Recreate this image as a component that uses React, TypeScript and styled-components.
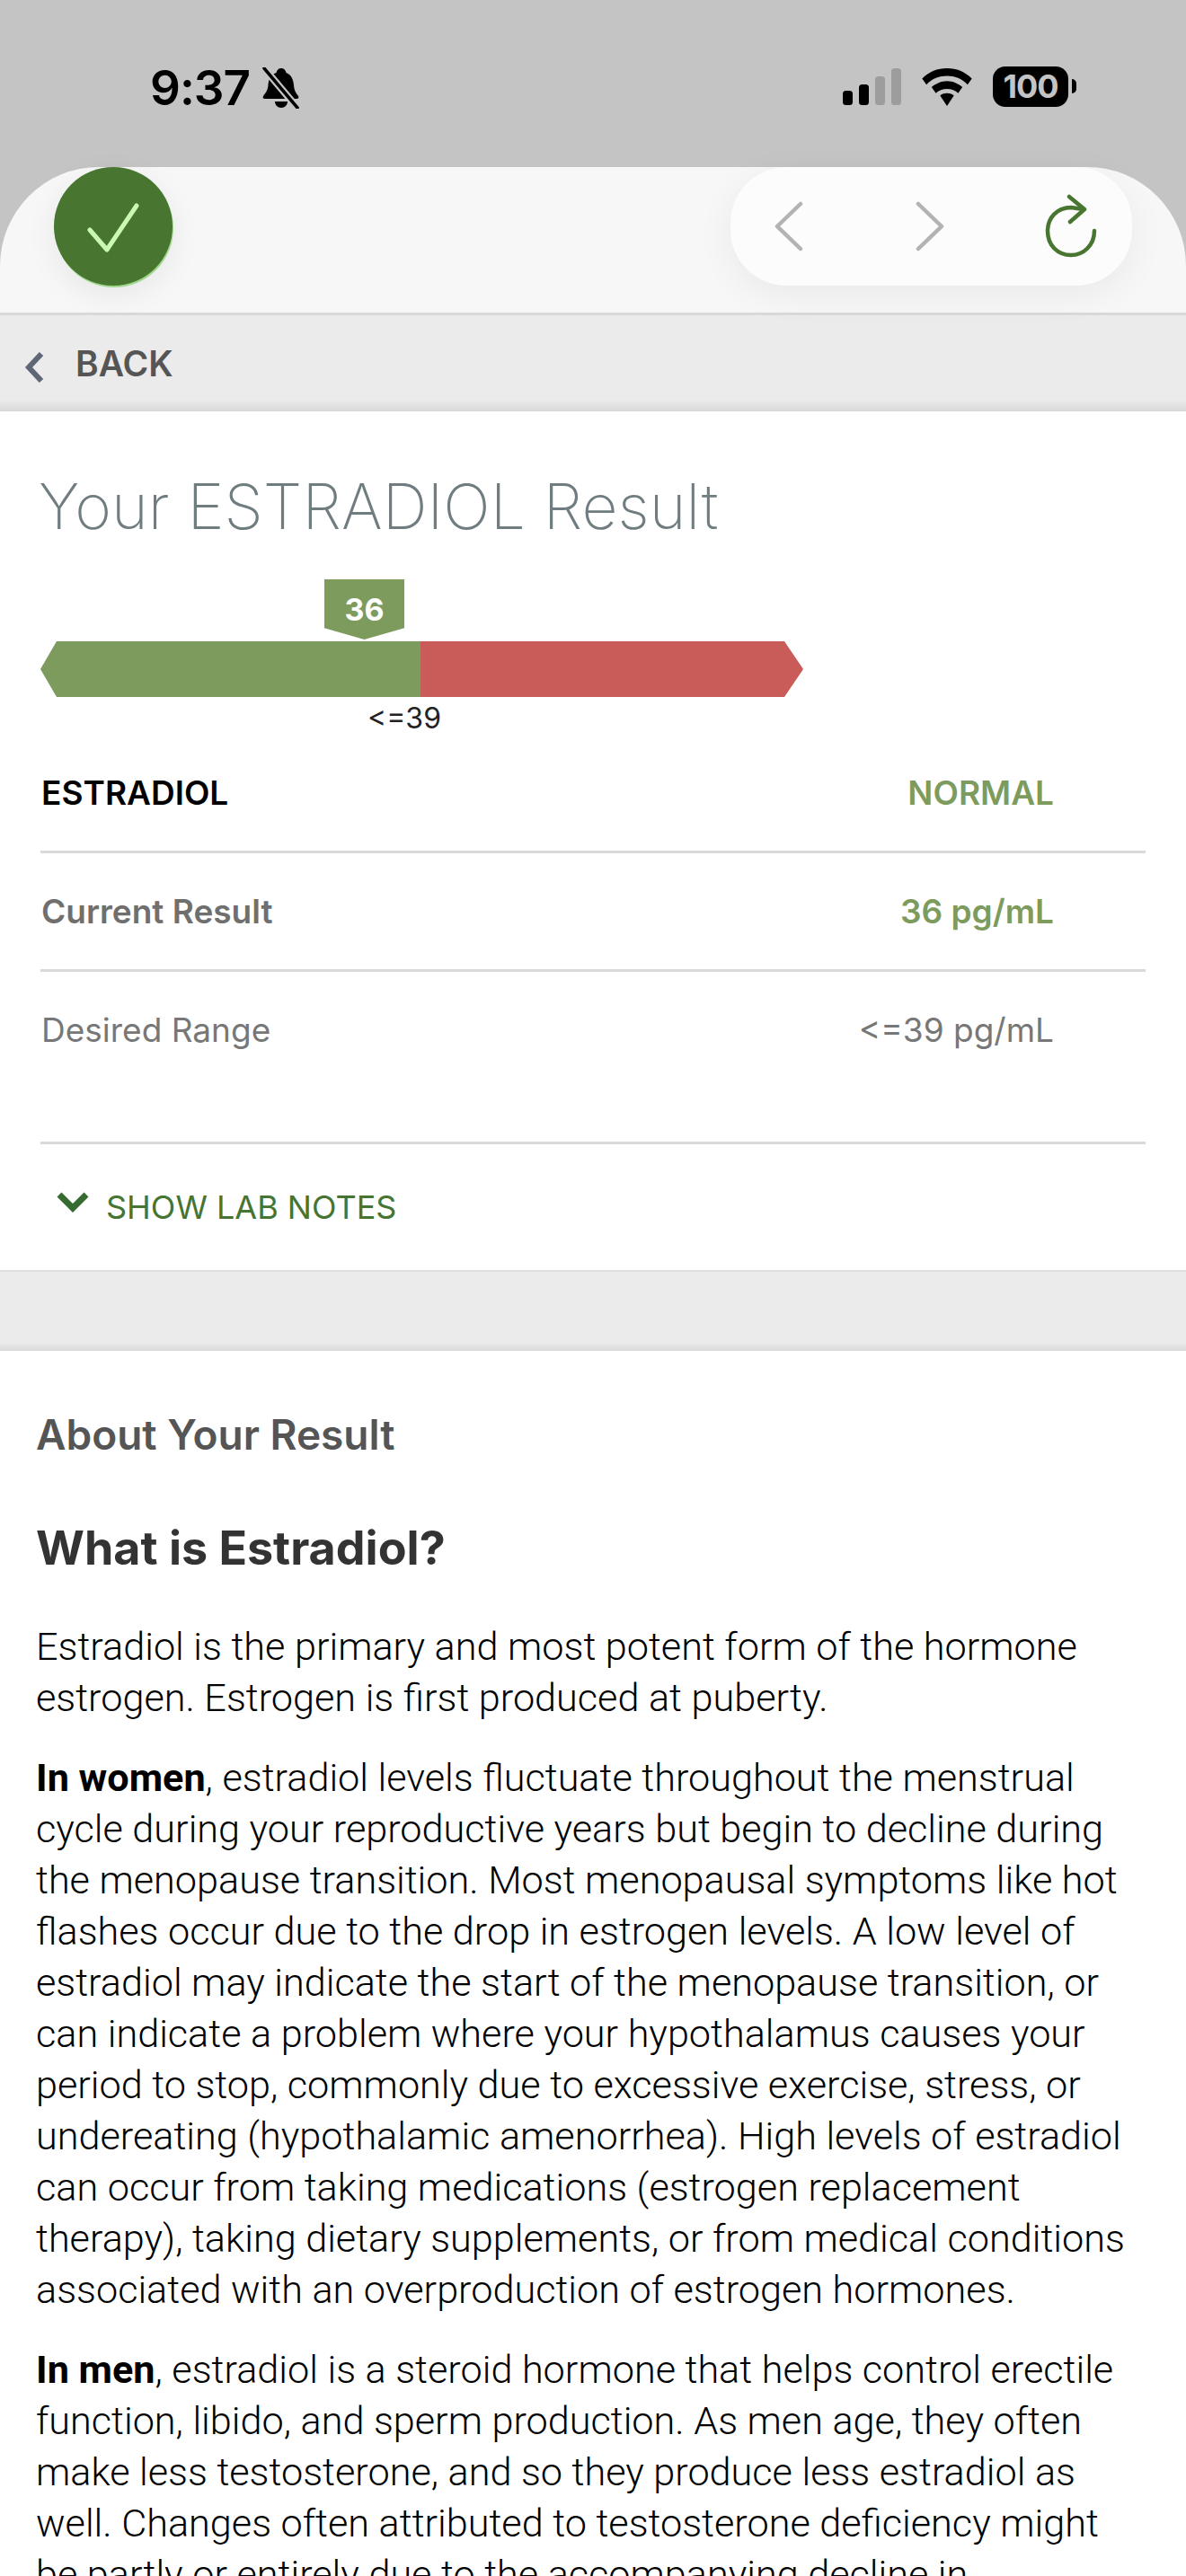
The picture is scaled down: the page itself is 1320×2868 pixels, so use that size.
import React from 'react'
import styled, { createGlobalStyle } from 'styled-components'

const GlobalStyle = createGlobalStyle`
  html, body {
    margin: 0;
    padding: 0;
    background: #fff;
  }
`
const Page = styled.div`
  width: 1320px;
  height: 2868px;
  overflow: hidden;
  background: #c4c4c4;
  font-family: Inter, 'Liberation Sans', sans-serif;
`
const StatusBar = styled.div`
  height: 186px;
  box-sizing: border-box;
  padding: 70px 131px 0 167px;
  display: flex;
  justify-content: space-between;
  align-items: flex-start;
`
const StatusLeft = styled.div`
  display: flex;
  align-items: center;
  gap: 13px;
`
const Time = styled.span`
  font-size: 53px;
  line-height: 56px;
  font-weight: 600;
  color: #000;
  letter-spacing: -1px;
`
const StatusRight = styled.div`
  display: flex;
  align-items: center;
  gap: 22px;
  margin-top: 4px;
`
const Toolbar = styled.div`
  height: 162px;
  box-sizing: border-box;
  padding-left: 60px;
  padding-right: 60px;
  display: flex;
  justify-content: space-between;
  align-items: flex-start;
  background: #f7f7f8;
  border-radius: 110px 110px 0 0;
`
const CheckBadge = styled.div`
  width: 132px;
  height: 132px;
  border-radius: 50%;
  background: #487631;
  box-shadow: 1px 2px 0 #9fd88c, 0 10px 34px rgba(0, 0, 0, 0.07);
  display: flex;
  align-items: center;
  justify-content: center;
`
const NavPill = styled.div`
  width: 447px;
  height: 132px;
  border-radius: 62px;
  background: #fcfcfc;
  box-shadow: 0 10px 40px rgba(0, 0, 0, 0.06);
  box-sizing: border-box;
  padding: 0 38px 0 49px;
  display: flex;
  align-items: center;
  justify-content: space-between;
`
const NavArrows = styled.div`
  display: flex;
  align-items: center;
  gap: 125px;
`
const BackBar = styled.div`
  height: 110px;
  box-sizing: border-box;
  border-top: 3px solid #d9d9d9;
  background: linear-gradient(#ebebeb 88%, #d9d9d9 100%);
  padding: 24px 0 0 27px;
  display: flex;
  align-items: flex-start;
  gap: 35px;
  svg {
    margin-top: 17px;
  }
`
const BackText = styled.span`
  font-size: 39px;
  line-height: 60px;
  font-weight: 600;
  color: #555;
`
const ResultCard = styled.section`
  height: 958px;
  box-sizing: border-box;
  background: #fff;
  padding: 65px 45px 0;
  border-bottom: 2px solid #dedede;
`
const Title = styled.h1`
  margin: 0 0 0 -2px;
  font-size: 69.5px;
  line-height: 82px;
  font-weight: 200;
  color: #6f7c80;
  letter-spacing: 0.1px;
`
const Gauge = styled.div`
  position: relative;
  width: 849px;
  height: 124px;
  margin-top: 40px;
  padding-top: 69px;
  box-sizing: border-box;
`
const Marker = styled.div`
  position: absolute;
  left: 316px;
  top: 0;
  width: 89px;
  height: 67px;
  background: #7d9b5c;
  clip-path: polygon(0 0, 100% 0, 100% 81%, 50% 100%, 0 81%);
  color: #fff;
  font-size: 34px;
  font-weight: 700;
  line-height: 68px;
  text-align: center;
`
const Bar = styled.div`
  display: flex;
  height: 62px;
  clip-path: polygon(18px 0, calc(100% - 21px) 0, 100% 50%, calc(100% - 21px) 100%, 18px 100%, 0 50%);
`
const BarPart = styled.div<{ $color: string; $size: number }>`
  flex: ${(props) => props.$size};
  background: ${(props) => props.$color};
`
const BarLabel = styled.div`
  position: absolute;
  left: 355px;
  top: 135px;
  width: 100px;
  text-align: center;
  font-size: 32px;
  line-height: 40px;
  color: #222;
`
const Rows = styled.div`
  margin-top: 49px;
`
const Row = styled.div<{ $height: number }>`
  height: ${(props) => props.$height}px;
  box-sizing: border-box;
  border-bottom: 3px solid #d9d9d9;
  display: flex;
  justify-content: space-between;
  align-items: flex-start;
  padding: 40px 102px 0 1px;
  line-height: 50px;
  font-size: 37px;
`
const RowName = styled.span<{ $color: string; $weight: number }>`
  color: ${(props) => props.$color};
  font-weight: ${(props) => props.$weight};
`
const RowValue = styled.span<{ $color: string; $weight: number }>`
  color: ${(props) => props.$color};
  font-weight: ${(props) => props.$weight};
`
const Toggle = styled.div`
  display: flex;
  align-items: flex-start;
  padding: 45px 0 0 18px;
  gap: 19px;
  color: #467431;
  font-size: 36px;
  line-height: 50px;
  svg {
    margin-top: 8px;
  }
`
const Spacer = styled.div`
  height: 88px;
  background: linear-gradient(#ebebeb 90%, #d9d9d9 100%);
`
const About = styled.section`
  background: #fff;
  padding: 63px 40px 0;
  height: 1400px;
`
const AboutLabel = styled.h2`
  margin: 0;
  font-size: 46px;
  line-height: 60px;
  font-weight: 600;
  color: #555;
`
const AboutHeading = styled.h3`
  margin: 67px 0 0;
  font-size: 52px;
  line-height: 60px;
  font-weight: 700;
  color: #333;
`
const Body = styled.p`
  margin: 32px 0 0;
  font-family: Roboto, 'Liberation Sans', Arial, sans-serif;
  font-weight: 300;
  font-size: 43.2px;
  line-height: 57px;
  color: #000;
  &:first-of-type {
    margin-top: 51px;
  }
  b {
    font-weight: 700;
  }
`
const Line = styled.span`
  display: block;
  white-space: nowrap;
`

const BellOff = () => (
  <svg width="44" height="46" viewBox="0 0 44 46">
    <path d="M22 1c3 0 5 2 5.500 5 6 2 8 8 8.500 14 .4 6 3 9 5 12 1 2 0 3-2 3H4c-2 0-3-1-2-3 2-3 5-6 5.500-12 .3-6 2.500-12 9-14C17 3 19 1 22 1z" fill="#000" />
    <path d="M15 38h14c0 4-3 7-7 7s-7-3-7-7z" fill="#000" />
    <path d="M3 1l37 44" stroke="#c4c4c4" strokeWidth="8" />
    <path d="M3 1l37 44" stroke="#000" strokeWidth="3.500" strokeLinecap="round" />
  </svg>
)

const Signal = () => (
  <svg width="65" height="41" viewBox="0 0 65 41">
    <rect x="0" y="25" width="11" height="16" rx="3.500" fill="#000" />
    <rect x="18" y="18" width="11" height="23" rx="3.500" fill="#000" />
    <rect x="36" y="9" width="11" height="32" rx="3.500" fill="#9d9d9d" />
    <rect x="54" y="0" width="11" height="41" rx="3.500" fill="#9d9d9d" />
  </svg>
)

const Wifi = () => (
  <svg width="58" height="42" viewBox="0 0 58 44">
    <path d="M29 0c11 0 21 4 29 12l-5 7C46 12 38 9 29 9S12 12 5 19l-5-7C8 4 18 0 29 0z" fill="#000" />
    <path d="M29 15c7 0 13 3 18 7l-5 7c-3-3-8-5-13-5s-10 2-13 5l-5-7c5-4 11-7 18-7z" fill="#000" />
    <path d="M29 29c4 0 6 1 8 3l-8 12-8-12c2-2 4-3 8-3z" fill="#000" />
  </svg>
)

const Battery = styled.div`
  position: relative;
  width: 84px;
  height: 45px;
  border-radius: 14px;
  background: #000;
  color: #c4c4c4;
  font-family: Inter, sans-serif;
  font-size: 36px;
  font-weight: 700;
  line-height: 45px;
  text-align: center;
  letter-spacing: -1px;
  &::after {
    content: '';
    position: absolute;
    right: -9px;
    top: 14px;
    width: 5px;
    height: 16px;
    border-radius: 0 5px 5px 0;
    background: #000;
  }
`

const Reload = () => (
  <svg width="60" height="72" viewBox="0 0 60 72" fill="none" stroke="#487631" strokeWidth="4.500" strokeLinecap="round" strokeLinejoin="round">
    <path d="M56 41C56 57 44 68 30 68C15 68 4 57 4 41C4 26 15 15 30 15L44 17" />
    <path d="M28 3l17 14-16 14" />
  </svg>
)

const NavChevron = ({ flip }: { flip?: boolean }) => (
  <svg width="32" height="56" viewBox="0 0 32 56" fill="none" stroke="#b3b3b3" strokeWidth="4.500" strokeLinecap="round" strokeLinejoin="round">
    <path d={flip ? 'M3 3l26 25-26 25' : 'M29 3L3 28l26 25'} />
  </svg>
)

const App = (): JSX.Element => (
  <Page>
    <GlobalStyle />
    <StatusBar>
      <StatusLeft>
        <Time>9:37</Time>
        <BellOff />
      </StatusLeft>
      <StatusRight>
        <Signal />
        <Wifi />
        <Battery>100</Battery>
      </StatusRight>
    </StatusBar>
    <Toolbar>
      <CheckBadge>
        <svg width="60" height="60" viewBox="0 0 60 60" fill="none" stroke="#c9f9b4" strokeWidth="5" strokeLinecap="round" strokeLinejoin="round">
          <path d="M4 34l19 22L56 7" />
        </svg>
      </CheckBadge>
      <NavPill>
        <NavArrows>
          <NavChevron />
          <NavChevron flip />
        </NavArrows>
        <Reload />
      </NavPill>
    </Toolbar>
    <BackBar>
      <svg width="22" height="34" viewBox="0 0 22 34" fill="none" stroke="#5e6678" strokeWidth="6">
        <path d="M19 2L5 17l14 15" />
      </svg>
      <BackText>BACK</BackText>
    </BackBar>
    <ResultCard>
      <Title>Your ESTRADIOL Result</Title>
      <Gauge>
        <Marker>36</Marker>
        <Bar>
          <BarPart $color="#7d9b5c" $size={423} />
          <BarPart $color="#c95b59" $size={426} />
        </Bar>
        <BarLabel>&lt;=39</BarLabel>
      </Gauge>
      <Rows>
        <Row $height={132}>
          <RowName $color="#000" $weight={600}>ESTRADIOL</RowName>
          <RowValue $color="#7d9b5c" $weight={600}>NORMAL</RowValue>
        </Row>
        <Row $height={132}>
          <RowName $color="#6f6f6f" $weight={600}>Current Result</RowName>
          <RowValue $color="#7d9b5c" $weight={600}>36 pg/mL</RowValue>
        </Row>
        <Row $height={192}>
          <RowName $color="#777" $weight={400}>Desired Range</RowName>
          <RowValue $color="#777" $weight={400}>&lt;=39 pg/mL</RowValue>
        </Row>
      </Rows>
      <Toggle>
        <svg width="36" height="24" viewBox="0 0 36 24" fill="none" stroke="#356b2f" strokeWidth="7">
          <path d="M3 3l15 15L33 3" />
        </svg>
        <span>SHOW LAB NOTES</span>
      </Toggle>
    </ResultCard>
    <Spacer />
    <About>
      <AboutLabel>About Your Result</AboutLabel>
      <AboutHeading>What is Estradiol?</AboutHeading>
      <Body>
        <Line>Estradiol is the primary and most potent form of the hormone</Line>
        <Line>estrogen. Estrogen is first produced at puberty.</Line>
      </Body>
      <Body>
        <Line><b>In women</b>, estradiol levels fluctuate throughout the menstrual</Line>
        <Line>cycle during your reproductive years but begin to decline during</Line>
        <Line>the menopause transition. Most menopausal symptoms like hot</Line>
        <Line>flashes occur due to the drop in estrogen levels. A low level of</Line>
        <Line>estradiol may indicate the start of the menopause transition, or</Line>
        <Line>can indicate a problem where your hypothalamus causes your</Line>
        <Line>period to stop, commonly due to excessive exercise, stress, or</Line>
        <Line>undereating (hypothalamic amenorrhea). High levels of estradiol</Line>
        <Line>can occur from taking medications (estrogen replacement</Line>
        <Line>therapy), taking dietary supplements, or from medical conditions</Line>
        <Line>associated with an overproduction of estrogen hormones.</Line>
      </Body>
      <Body>
        <Line><b>In men</b>, estradiol is a steroid hormone that helps control erectile</Line>
        <Line>function, libido, and sperm production. As men age, they often</Line>
        <Line>make less testosterone, and so they produce less estradiol as</Line>
        <Line>well. Changes often attributed to testosterone deficiency might</Line>
        <Line>be partly or entirely due to the accompanying decline in</Line>
      </Body>
    </About>
  </Page>
)

export default App
